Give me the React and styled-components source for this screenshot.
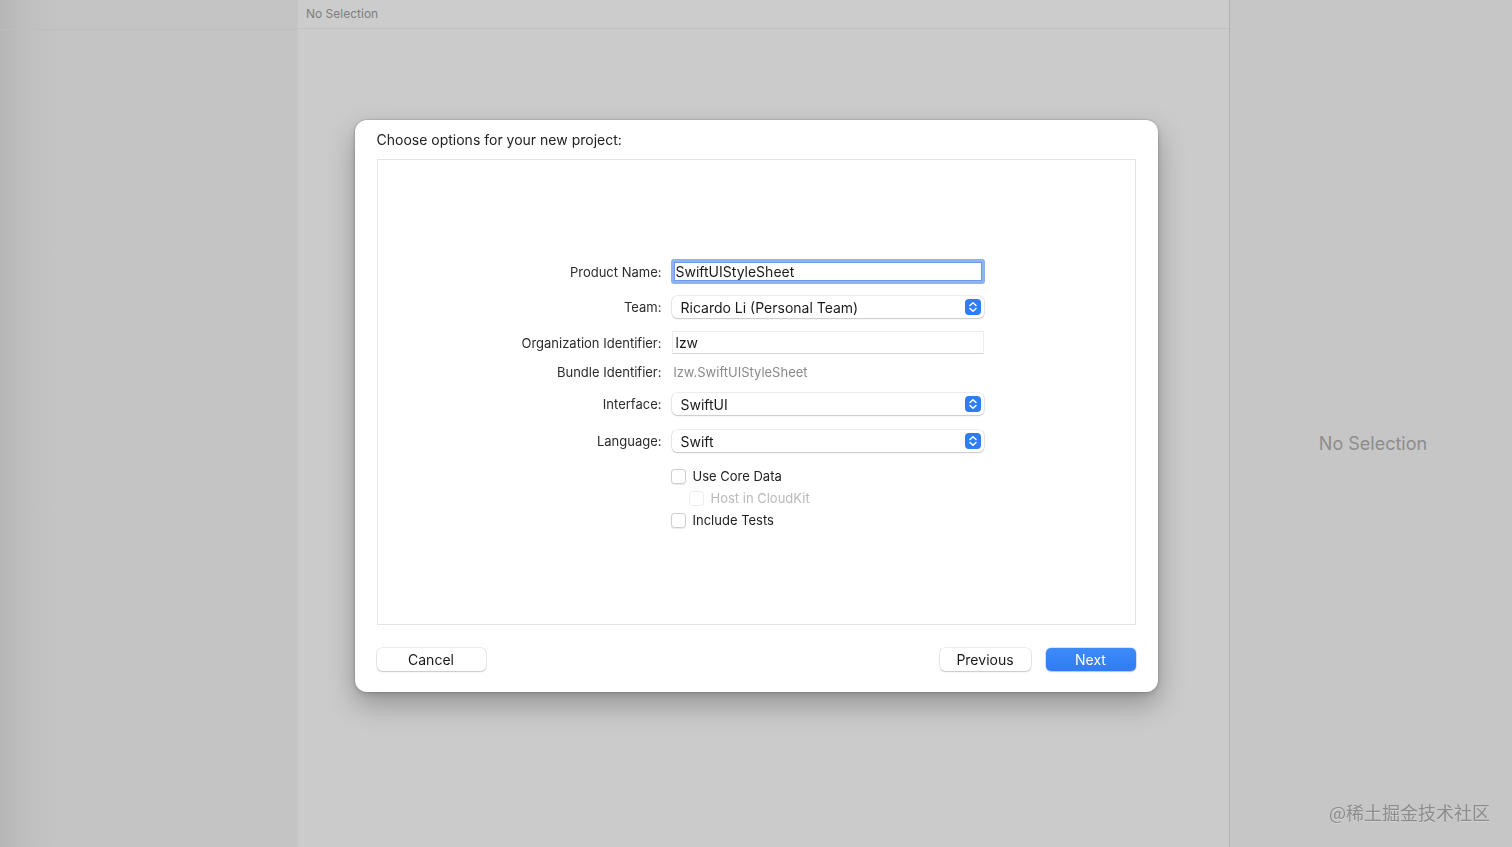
import React from 'react';
import styled, { createGlobalStyle } from 'styled-components';

const GlobalStyle = createGlobalStyle`
    html, body {
        margin: 0;
        padding: 0;
        height: 100%;
        overflow: hidden;
    }
    body {
        font-family: Inter, "Noto Sans", "Liberation Sans", sans-serif;
        color: #1d1d1f;
        -webkit-font-smoothing: antialiased;
    }
    #root {
        height: 100%;
    }
`;

function PopupArrows() {
    return (
        <svg width="16" height="16" viewBox="0 0 16 16">
            <rect x="0" y="0" width="16" height="16" rx="4" fill="#2f7df6" />
            <path d="M5 6.5 L8 3.8 L11 6.5" fill="none" stroke="#fff" strokeWidth="1.5" strokeLinecap="round" strokeLinejoin="round" />
            <path d="M5 9.5 L8 12.2 L11 9.5" fill="none" stroke="#fff" strokeWidth="1.5" strokeLinecap="round" strokeLinejoin="round" />
        </svg>
    );
}

function FormRow({ label, mt, children }) {
    return (
        <Row $mt={mt}>
            <Label>{label}</Label>
            {children}
        </Row>
    );
}

function Popup({ value, mt, label }) {
    return (
        <FormRow label={label} mt={mt}>
            <PopupButton>
                <span>{value}</span>
                <PopupArrows />
            </PopupButton>
        </FormRow>
    );
}

function Check({ label, indent, disabled, mt }) {
    return (
        <CheckRow $mt={mt} $indent={indent}>
            <Box $disabled={disabled} />
            <CheckLabel $disabled={disabled}>{label}</CheckLabel>
        </CheckRow>
    );
}

export default function App() {
    return (
        <>
            <GlobalStyle />
            <Workspace>
                <Sidebar>
                    <TopStrip />
                </Sidebar>
                <Editor>
                    <EditorBar>No Selection</EditorBar>
                </Editor>
                <Inspector>
                    <InspectorEmpty>No Selection</InspectorEmpty>
                </Inspector>
            </Workspace>

            <Overlay>
                <Sheet>
                    <Title>Choose options for your new project:</Title>
                    <Panel>
                        <Form>
                            <FormRow label="Product Name:" mt={99}>
                                <FocusField>SwiftUIStyleSheet</FocusField>
                            </FormRow>
                            <Popup label="Team:" value="Ricardo Li (Personal Team)" mt={12} />
                            <FormRow label="Organization Identifier:" mt={13}>
                                <TextField>lzw</TextField>
                            </FormRow>
                            <FormRow label="Bundle Identifier:" mt={8}>
                                <Static>lzw.SwiftUIStyleSheet</Static>
                            </FormRow>
                            <Popup label="Interface:" value="SwiftUI" mt={11} />
                            <Popup label="Language:" value="Swift" mt={15} />
                            <Check label="Use Core Data" mt={16} />
                            <Check label="Host in CloudKit" indent disabled mt={6} />
                            <Check label="Include Tests" mt={6} />
                        </Form>
                    </Panel>
                    <Footer>
                        <Button>Cancel</Button>
                        <Spacer />
                        <Button $w={91}>Previous</Button>
                        <Button $w={90} $primary>Next</Button>
                    </Footer>
                </Sheet>
            </Overlay>

            <Watermark>@稀土掘金技术社区</Watermark>
        </>
    );
}

const Workspace = styled.div`
    display: grid;
    grid-template-columns: 297px 1fr 283px;
    height: 100vh;
`;

const Sidebar = styled.aside`
    background: linear-gradient(to right, #b6b6b6 0px, #c0c0c0 30px, #c4c4c4 60px, #c4c4c4 100%);
`;

const TopStrip = styled.div`
    height: 29px;
    border-bottom: 1px solid #bdbdbd;
`;

const Editor = styled.main`
    background: #cbcbcb;
    border-left: 1px solid #c6c6c6;
`;

const EditorBar = styled.div`
    height: 29px;
    box-sizing: border-box;
    padding: 6px 0 0 8px;
    font-size: 12px;
    color: #7e7e7e;
    background: #cccccc;
    border-bottom: 1px solid #c2c2c2;
`;

const Inspector = styled.aside`
    background: #c6c6c6;
    border-left: 1px solid #b3b3b3;
    display: flex;
    align-items: center;
    justify-content: center;
    padding-left: 4px;
    padding-top: 40px;
`;

const InspectorEmpty = styled.div`
    font-size: 18px;
    color: #8d8d8d;
`;

const Overlay = styled.div`
    position: fixed;
    inset: 0;
    display: flex;
    justify-content: center;
    align-items: flex-start;
    padding-top: 120px;
`;

const Sheet = styled.div`
    width: 803px;
    box-sizing: border-box;
    background: #fff;
    border-radius: 12px;
    padding: 10px 22px 21px;
    box-shadow: 0 0 0 1px rgba(0, 0, 0, 0.08), 0 12px 28px rgba(0, 0, 0, 0.28), 0 2px 6px rgba(0, 0, 0, 0.15);
`;

const Title = styled.div`
    font-size: 14px;
    line-height: 20px;
    color: #222;
    margin-bottom: 9px;
`;

const Panel = styled.div`
    height: 466px;
    box-sizing: border-box;
    border: 1px solid #e4e4e4;
    background: #fff;
`;

const Form = styled.div`
    display: flex;
    flex-direction: column;
`;

const Row = styled.div`
    display: grid;
    grid-template-columns: 284px 314px;
    column-gap: 9px;
    align-items: center;
    margin-top: ${p => p.$mt || 0}px;
`;

const Label = styled.div`
    text-align: right;
    font-size: 13px;
    color: #2b2b2b;
`;

const FocusField = styled.div`
    height: 25px;
    box-sizing: border-box;
    border: 3px solid #8eb4f0;
    border-radius: 3px;
    padding-left: 2px;
    font-size: 14px;
    line-height: 19px;
    color: #1a1a1a;
    box-shadow: inset 0 0 0 1px #6d9ae6;
`;

const TextField = styled.div`
    height: 23px;
    margin: 0 1px;
    box-sizing: border-box;
    border: 1px solid #ececec;
    border-bottom-color: #d6d6d6;
    padding-left: 3px;
    font-size: 14px;
    line-height: 21px;
    color: #1a1a1a;
`;

const Static = styled.div`
    height: 20px;
    line-height: 20px;
    padding-left: 3px;
    font-size: 13px;
    color: #8a8a8a;
`;

const PopupButton = styled.div`
    height: 22px;
    margin: 0 1px;
    box-sizing: border-box;
    display: flex;
    align-items: center;
    justify-content: space-between;
    padding: 0 3px 0 9px;
    border-radius: 5px;
    background: #fff;
    box-shadow: 0 0 0 0.5px rgba(0, 0, 0, 0.14), 0 1px 1.5px rgba(0, 0, 0, 0.16);
    font-size: 14px;
    color: #1a1a1a;
`;

const CheckRow = styled.div`
    display: flex;
    align-items: center;
    gap: 7px;
    height: 16px;
    margin-top: ${p => p.$mt || 0}px;
    padding-left: ${p => (p.$indent ? 311 : 293)}px;
`;

const Box = styled.div`
    width: 15px;
    height: 15px;
    box-sizing: border-box;
    border-radius: 3.5px;
    background: #fff;
    border: 1px solid ${p => (p.$disabled ? '#ececec' : '#cdcdcd')};
    box-shadow: ${p => (p.$disabled ? 'none' : '0 0.5px 1px rgba(0,0,0,0.08)')};
`;

const CheckLabel = styled.span`
    font-size: 13px;
    color: ${p => (p.$disabled ? '#b9b9b9' : '#222')};
`;

const Footer = styled.div`
    display: flex;
    align-items: center;
    gap: 15px;
    margin-top: 23px;
`;

const Spacer = styled.div`
    flex: 1;
`;

const Button = styled.div`
    width: ${p => p.$w || 109}px;
    height: 23px;
    box-sizing: border-box;
    border-radius: 5px;
    display: flex;
    align-items: center;
    justify-content: center;
    font-size: 14px;
    color: ${p => (p.$primary ? '#fff' : '#1a1a1a')};
    background: ${p => (p.$primary ? 'linear-gradient(#3d8af7, #2f7cf6)' : '#fff')};
    box-shadow: ${p => (p.$primary
        ? '0 0 0 0.5px rgba(0,80,200,0.3), 0 1px 1.5px rgba(0,0,0,0.15)'
        : '0 0 0 0.5px rgba(0,0,0,0.14), 0 1px 1.5px rgba(0,0,0,0.16)')};
`;

const Watermark = styled.div`
    position: fixed;
    right: 22px;
    bottom: 22px;
    font-family: "Noto Sans CJK SC", sans-serif;
    font-size: 18px;
    color: #8c8c8c;
    text-shadow: 0 1px 0 rgba(255, 255, 255, 0.25);
`;
